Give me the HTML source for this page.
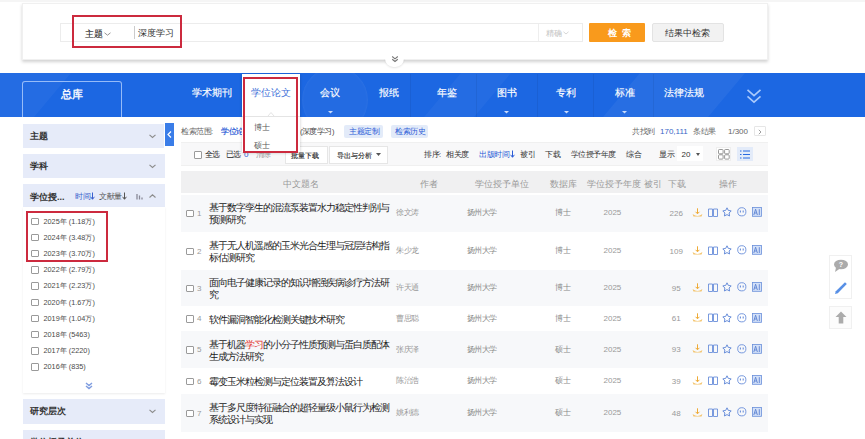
<!DOCTYPE html>
<html><head><meta charset="utf-8">
<style>
*{margin:0;padding:0;box-sizing:border-box}
html,body{width:865px;height:439px;overflow:hidden;background:#fff;font-family:"Liberation Sans",sans-serif;color:#333}
.a{position:absolute;white-space:nowrap}
.t{position:absolute;white-space:nowrap;line-height:1}
.cb{position:absolute;width:7.5px;height:7.5px;border:1px solid #9a9a9a;border-radius:1px;background:#fff}
svg{position:absolute;overflow:visible}
</style></head><body>

<div class="a" style="left:0px;top:0px;width:865px;height:2px;background:#f5f5f5"></div>
<div class="a" style="left:22px;top:3px;width:746px;height:57px;background:#fff;border:1px solid #f0f0f0;box-shadow:0 2px 3px rgba(0,0,0,.18)"></div>
<div class="a" style="left:60px;top:23px;width:523px;height:19px;border:1px solid #ececec;background:#fff"></div>
<div class="t" style="left:85px;top:29.60px;font-size:9px;color:#222;-webkit-text-stroke:0.08px #222">主题</div>
<svg style="left:104px;top:31.5px" width="7" height="4"><path d="M0.5 0.8 L3.5 3.2 L6.5 0.8" fill="none" stroke="#888" stroke-width="0.9"/></svg>
<div class="a" style="left:134px;top:26px;width:1px;height:13px;background:#ccc"></div>
<div class="t" style="left:138px;top:29.30px;font-size:9px;color:#333;">深度学习</div>
<div class="a" style="left:538px;top:24px;width:1px;height:17px;background:#eee"></div>
<div class="t" style="left:546px;top:30.05px;font-size:7.5px;color:#c4c4c4;letter-spacing:-0.5px;">精确</div>
<svg style="left:563px;top:31px" width="6" height="4"><path d="M0.5 0.8 L3 3 L5.5 0.8" fill="none" stroke="#ccc" stroke-width="0.8"/></svg>
<div class="a" style="left:589px;top:23px;width:56px;height:19px;background:#f99a1c;border-radius:1px"></div>
<div class="t" style="left:608px;top:29.30px;font-size:9px;color:#fff;font-weight:bold;letter-spacing:1px">检&nbsp;索</div>
<div class="a" style="left:652px;top:23px;width:72px;height:19px;background:#f2f2f2;border:1px solid #e3e3e3;border-radius:2px"></div>
<div class="t" style="left:665px;top:29.30px;font-size:9px;color:#333;">结果中检索</div>
<div class="a" style="left:385px;top:50px;width:19px;height:17px;border-radius:10px;background:#fff;box-shadow:0 1px 2px rgba(0,0,0,.10)"></div>
<div class="a" style="left:375px;top:48px;width:40px;height:11px;background:#fff"></div>
<svg style="left:391px;top:55px" width="8" height="8"><path d="M1.2 1.5 L4 3.8 L6.8 1.5 M1.2 4.2 L4 6.5 L6.8 4.2" fill="none" stroke="#777" stroke-width="1.1"/></svg>
<div class="a" style="left:72px;top:15px;width:110px;height:33px;border:2px solid #cc2a3e"></div>
<div class="a" style="left:0;top:73px;width:865px;height:44px;background:#1c67e2;overflow:hidden">
<div class="a" style="left:302px;top:-6px;width:66px;height:66px;border-radius:33px;background:rgba(255,255,255,.03);box-shadow:inset 0 0 3px rgba(255,255,255,.08)"></div>
<div class="a" style="left:-30px;top:-10px;width:80px;height:70px;transform:skewX(-40deg);background:rgba(255,255,255,0.04)"></div>
<div class="a" style="left:440px;top:-10px;width:50px;height:70px;transform:skewX(-40deg);background:rgba(255,255,255,0.04)"></div>
<div class="a" style="left:619px;top:-10px;width:105px;height:70px;transform:skewX(-40deg);background:rgba(255,255,255,0.05)"></div>
</div>
<div class="a" style="left:22px;top:81px;width:100px;height:36px;border:1px solid rgba(190,215,255,.75);border-bottom:none;border-radius:3px 3px 0 0"></div>
<div class="t" style="left:61px;top:89.30px;font-size:11px;color:#fff;-webkit-text-stroke:0.35px #fff">总库</div>
<div class="t" style="left:192px;top:88.30px;font-size:10px;color:#fff;-webkit-text-stroke:0.15px #fff">学术期刊</div>
<div class="t" style="left:320px;top:88.30px;font-size:10px;color:#fff;-webkit-text-stroke:0.15px #fff">会议</div>
<div class="t" style="left:379px;top:88.30px;font-size:10px;color:#fff;-webkit-text-stroke:0.15px #fff">报纸</div>
<div class="t" style="left:437px;top:88.30px;font-size:10px;color:#fff;-webkit-text-stroke:0.15px #fff">年鉴</div>
<div class="t" style="left:497px;top:88.30px;font-size:10px;color:#fff;-webkit-text-stroke:0.15px #fff">图书</div>
<div class="t" style="left:556px;top:88.30px;font-size:10px;color:#fff;-webkit-text-stroke:0.15px #fff">专利</div>
<div class="t" style="left:615px;top:88.30px;font-size:10px;color:#fff;-webkit-text-stroke:0.15px #fff">标准</div>
<div class="t" style="left:664px;top:88.30px;font-size:10px;color:#fff;-webkit-text-stroke:0.15px #fff">法律法规</div>
<div class="a" style="left:410px;top:74px;width:1px;height:43px;background:rgba(0,0,0,.06)"></div>
<div class="a" style="left:476px;top:74px;width:1px;height:43px;background:rgba(0,0,0,.06)"></div>
<div class="a" style="left:537px;top:74px;width:1px;height:43px;background:rgba(0,0,0,.06)"></div>
<div class="a" style="left:593px;top:74px;width:1px;height:43px;background:rgba(0,0,0,.06)"></div>
<div class="a" style="left:653px;top:74px;width:1px;height:43px;background:rgba(0,0,0,.06)"></div>
<svg style="left:327.5px;top:111px" width="5" height="3"><path d="M0 0 L5 0 L2.5 2.6 Z" fill="#c9dbfb"/></svg>
<svg style="left:503.5px;top:111px" width="5" height="3"><path d="M0 0 L5 0 L2.5 2.6 Z" fill="#c9dbfb"/></svg>
<svg style="left:563.5px;top:111px" width="5" height="3"><path d="M0 0 L5 0 L2.5 2.6 Z" fill="#c9dbfb"/></svg>
<svg style="left:621.5px;top:111px" width="5" height="3"><path d="M0 0 L5 0 L2.5 2.6 Z" fill="#c9dbfb"/></svg>
<svg style="left:746px;top:88px" width="16" height="17"><path d="M1.5 1.8 L8 7.6 L14.5 1.8 M1.5 8.4 L8 14.2 L14.5 8.4" fill="none" stroke="#a9c9fc" stroke-width="1.6"/></svg>
<div class="a" style="left:23px;top:124px;width:141px;height:24px;background:#e6ebf9"></div>
<div class="t" style="left:30px;top:132.30px;font-size:9px;color:#333;font-weight:bold">主题</div>
<div class="a" style="left:23px;top:154px;width:142px;height:24px;background:#e6ebf9"></div>
<div class="t" style="left:30px;top:162.30px;font-size:9px;color:#333;font-weight:bold">学科</div>
<div class="a" style="left:23px;top:184px;width:142px;height:23px;background:#e6ebf9"></div>
<div class="t" style="left:30px;top:192.80px;font-size:9px;color:#333;font-weight:bold">学位授...</div>
<div class="t" style="left:75px;top:193.05px;font-size:7.5px;color:#3a5fcd;letter-spacing:-0.5px;">时间</div>
<svg style="left:90px;top:192.0px" width="5" height="8"><path d="M2.5 0.5 V7 M0.6 4.8 L2.5 7.3 L4.4 4.8" fill="none" stroke="#3a5fcd" stroke-width="1"/></svg>
<div class="t" style="left:99px;top:193.05px;font-size:7.5px;color:#555;letter-spacing:-0.5px;">文献量</div>
<svg style="left:122px;top:192.0px" width="5" height="8"><path d="M2.5 0.5 V7 M0.6 4.8 L2.5 7.3 L4.4 4.8" fill="none" stroke="#555" stroke-width="1"/></svg>
<svg style="left:136px;top:192px" width="8" height="8"><path d="M1 7.5 V2 M3.5 7.5 V3.5 M6 7.5 V5.5" stroke="#8a8a99" stroke-width="1.3"/></svg>
<svg style="left:149px;top:134px" width="7" height="4"><path d="M0.5 0.8 L3.5 3.5 L6.5 0.8" fill="none" stroke="#8c8c8c" stroke-width="1.1"/></svg>
<svg style="left:149px;top:164px" width="7" height="4"><path d="M0.5 0.8 L3.5 3.5 L6.5 0.8" fill="none" stroke="#8c8c8c" stroke-width="1.1"/></svg>
<svg style="left:149px;top:194px" width="7" height="4"><path d="M0.5 3.5 L3.5 0.8 L6.5 3.5" fill="none" stroke="#8c8c8c" stroke-width="1.1"/></svg>
<div class="a" style="left:23px;top:207px;width:142px;height:186px;background:#fff;box-shadow:0 1px 2px rgba(0,0,0,.08)"></div>
<div class="cb" style="left:31px;top:217.5px"></div>
<div class="t" style="left:43.5px;top:217.55px;font-size:7.3px;color:#4a4a4a;">2025年 (1.18万)</div>
<div class="cb" style="left:31px;top:233.7px"></div>
<div class="t" style="left:43.5px;top:233.75px;font-size:7.3px;color:#4a4a4a;">2024年 (3.48万)</div>
<div class="cb" style="left:31px;top:249.9px"></div>
<div class="t" style="left:43.5px;top:249.95px;font-size:7.3px;color:#4a4a4a;">2023年 (3.70万)</div>
<div class="cb" style="left:31px;top:266.1px"></div>
<div class="t" style="left:43.5px;top:266.15px;font-size:7.3px;color:#4a4a4a;">2022年 (2.79万)</div>
<div class="cb" style="left:31px;top:282.3px"></div>
<div class="t" style="left:43.5px;top:282.35px;font-size:7.3px;color:#4a4a4a;">2021年 (2.23万)</div>
<div class="cb" style="left:31px;top:298.5px"></div>
<div class="t" style="left:43.5px;top:298.55px;font-size:7.3px;color:#4a4a4a;">2020年 (1.67万)</div>
<div class="cb" style="left:31px;top:314.7px"></div>
<div class="t" style="left:43.5px;top:314.75px;font-size:7.3px;color:#4a4a4a;">2019年 (1.04万)</div>
<div class="cb" style="left:31px;top:330.9px"></div>
<div class="t" style="left:43.5px;top:330.95px;font-size:7.3px;color:#4a4a4a;">2018年 (5463)</div>
<div class="cb" style="left:31px;top:347.1px"></div>
<div class="t" style="left:43.5px;top:347.15px;font-size:7.3px;color:#4a4a4a;">2017年 (2220)</div>
<div class="cb" style="left:31px;top:363.3px"></div>
<div class="t" style="left:43.5px;top:363.35px;font-size:7.3px;color:#4a4a4a;">2016年 (835)</div>
<svg style="left:85px;top:382px" width="8" height="8"><path d="M1 1 L4 3.6 L7 1 M1 4 L4 6.6 L7 4" fill="none" stroke="#7f9de0" stroke-width="1.4"/></svg>
<div class="a" style="left:23px;top:399px;width:142px;height:25px;background:#e6ebf9"></div>
<div class="t" style="left:30px;top:407.30px;font-size:9px;color:#333;font-weight:bold">研究层次</div>
<svg style="left:149px;top:409px" width="7" height="4"><path d="M0.5 0.8 L3.5 3.5 L6.5 0.8" fill="none" stroke="#8c8c8c" stroke-width="1.1"/></svg>
<div class="a" style="left:23px;top:430px;width:142px;height:25px;background:#e6ebf9"></div>
<div class="t" style="left:30px;top:438.30px;font-size:9px;color:#333;font-weight:bold">学位授予单位</div>
<div class="a" style="left:165px;top:123px;width:9px;height:23px;background:#3a7de8"></div>
<svg style="left:167px;top:131px" width="5" height="7"><path d="M4 0.5 L1 3.5 L4 6.5" fill="none" stroke="#fff" stroke-width="1.2"/></svg>
<div class="a" style="left:26px;top:211px;width:82px;height:51px;border:2px solid #cc2a3e"></div>
<div class="t" style="left:181px;top:127.75px;font-size:7.5px;color:#666;letter-spacing:-0.5px;">检索范围:</div>
<div class="t" style="left:300px;top:127.75px;font-size:7.5px;color:#444;letter-spacing:-0.5px;">(深度学习)</div>
<div class="t" style="left:221px;top:127.75px;font-size:7.5px;color:#2a5bd7;letter-spacing:-0.5px;-webkit-text-stroke:0.2px #2a5bd7">学位论文</div>
<div class="a" style="left:344px;top:125px;width:39px;height:13px;background:#e3ebf9;border-radius:2px"></div>
<div class="t" style="left:349px;top:127.95px;font-size:7.5px;color:#2a5bd7;letter-spacing:-0.5px;">主题定制</div>
<div class="a" style="left:391px;top:125px;width:37px;height:13px;background:#e3ebf9;border-radius:2px"></div>
<div class="t" style="left:395px;top:127.95px;font-size:7.5px;color:#2a5bd7;letter-spacing:-0.5px;">检索历史</div>
<div class="t" style="left:632px;top:128.05px;font-size:7.5px;color:#666;letter-spacing:-0.5px;">共找到</div>
<div class="t" style="left:660px;top:127.80px;font-size:8px;color:#3866c6;">170,111</div>
<div class="t" style="left:693px;top:128.05px;font-size:7.5px;color:#666;letter-spacing:-0.5px;">条结果</div>
<div class="t" style="left:728px;top:127.80px;font-size:8px;color:#666;">1/300</div>
<div class="a" style="left:754px;top:126px;width:12px;height:10px;border:1px solid #e6e6e6;background:#fff;border-radius:1px"></div>
<svg style="left:758px;top:129px" width="4" height="6"><path d="M0.8 0.8 L3 3 L0.8 5.2" fill="none" stroke="#888" stroke-width="0.8"/></svg>
<div class="a" style="left:181px;top:142px;width:587px;height:24px;background:#f8f8f9;border-top:1px solid #f0f0f0;border-bottom:1px solid #f0f0f0"></div>
<div class="cb" style="left:194px;top:151px"></div>
<div class="t" style="left:205px;top:150.80px;font-size:8px;color:#222;letter-spacing:-1px">全选</div>
<div class="t" style="left:226px;top:150.80px;font-size:8px;color:#222;letter-spacing:-1px">已选</div>
<div class="t" style="left:244px;top:150.80px;font-size:8px;color:#2a5bd7;">0</div>
<div class="t" style="left:256px;top:150.80px;font-size:8px;color:#999;letter-spacing:-1px">清除</div>
<div class="a" style="left:285px;top:146px;width:43px;height:18px;background:#fff;border:1px solid #e6e6e6"></div>
<div class="t" style="left:290.5px;top:151.65px;font-size:7.3px;color:#222;-webkit-text-stroke:0.15px #222">批量下载</div>
<div class="a" style="left:329px;top:146px;width:59px;height:18px;background:#fff;border:1px solid #e6e6e6"></div>
<div class="t" style="left:336.5px;top:151.65px;font-size:7.3px;color:#333;-webkit-text-stroke:0.15px #333">导出与分析</div>
<svg style="left:376px;top:153px" width="5" height="3"><path d="M0 0 L5 0 L2.5 3 Z" fill="#555"/></svg>
<div class="t" style="left:424px;top:151.05px;font-size:7.5px;color:#333;letter-spacing:-0.5px;">排序:</div>
<div class="t" style="left:446px;top:151.05px;font-size:7.5px;color:#333;letter-spacing:-0.5px;">相关度</div>
<div class="t" style="left:479px;top:151.05px;font-size:7.5px;color:#2a5bd7;letter-spacing:-0.5px;">出版时间</div>
<svg style="left:510px;top:150.0px" width="5" height="8"><path d="M2.5 0.5 V7 M0.6 4.8 L2.5 7.3 L4.4 4.8" fill="none" stroke="#2a5bd7" stroke-width="1"/></svg>
<div class="t" style="left:520px;top:151.05px;font-size:7.5px;color:#333;letter-spacing:-0.5px;">被引</div>
<div class="t" style="left:545px;top:151.05px;font-size:7.5px;color:#333;letter-spacing:-0.5px;">下载</div>
<div class="t" style="left:570.5px;top:151.05px;font-size:7.5px;color:#333;letter-spacing:-0.5px;">学位授予年度</div>
<div class="t" style="left:626px;top:151.05px;font-size:7.5px;color:#333;letter-spacing:-0.5px;">综合</div>
<div class="t" style="left:659px;top:151.05px;font-size:7.5px;color:#333;letter-spacing:-0.5px;">显示</div>
<div class="a" style="left:677px;top:146px;width:26px;height:15px;background:#fff"></div>
<div class="t" style="left:681.5px;top:150.80px;font-size:8px;color:#333;">20</div>
<svg style="left:696px;top:153px" width="4" height="3"><path d="M0 0 L4 0 L2 3 Z" fill="#555"/></svg>
<div class="a" style="left:716px;top:147px;width:15px;height:14px;background:#fff;border:1px solid #eee"></div>
<svg style="left:718px;top:149px" width="12" height="11"><rect x="0.5" y="0.5" width="4.6" height="4.3" rx="0.8" fill="none" stroke="#8c8c8c" stroke-width="0.9"/><rect x="6.6" y="0.5" width="4.6" height="4.3" rx="0.8" fill="none" stroke="#8c8c8c" stroke-width="0.9"/><rect x="0.5" y="5.8" width="4.6" height="4.3" rx="0.8" fill="none" stroke="#8c8c8c" stroke-width="0.9"/><rect x="6.6" y="5.8" width="4.6" height="4.3" rx="0.8" fill="none" stroke="#8c8c8c" stroke-width="0.9"/></svg>
<div class="a" style="left:737px;top:147px;width:16px;height:14px;background:#e3ebf9"></div>
<svg style="left:740px;top:150px" width="10" height="9"><path d="M0 1 H1.5 M3 1 H10 M0 4.5 H1.5 M3 4.5 H10 M0 8 H1.5 M3 8 H10" stroke="#2a6ae0" stroke-width="1"/></svg>
<div class="a" style="left:181px;top:171px;width:587px;height:22px;background:#f0f0f1"></div>
<div class="t" style="left:282.5px;top:180.45px;font-size:8.7px;color:#999;">中文题名</div>
<div class="t" style="left:419.5px;top:180.45px;font-size:8.7px;color:#999;">作者</div>
<div class="t" style="left:475px;top:180.45px;font-size:8.7px;color:#999;">学位授予单位</div>
<div class="t" style="left:550px;top:180.45px;font-size:8.7px;color:#999;">数据库</div>
<div class="t" style="left:587px;top:180.45px;font-size:8.7px;color:#999;">学位授予年度</div>
<div class="t" style="left:643.5px;top:180.45px;font-size:8.7px;color:#999;">被引</div>
<div class="t" style="left:668px;top:180.45px;font-size:8.7px;color:#999;">下载</div>
<div class="t" style="left:719px;top:180.45px;font-size:8.7px;color:#999;">操作</div>
<div class="a" style="left:181px;top:195px;width:587px;height:37px;background:#f7f8fa"></div>
<div class="cb" style="left:186px;top:209.5px"></div>
<div class="t" style="left:197px;top:209.80px;font-size:8px;color:#999;">1</div>
<div class="t" style="left:209px;top:203.15px;font-size:9.5px;color:#222;letter-spacing:-1px">基于数字孪生的混流泵装置水力稳定性判别与</div>
<div class="t" style="left:209px;top:215.15px;font-size:9.5px;color:#222;letter-spacing:-1px">预测研究</div>
<div class="t" style="left:396px;top:209.05px;font-size:7.5px;color:#999;letter-spacing:-0.5px;">徐文涛</div>
<div class="t" style="left:466.7px;top:209.05px;font-size:7.5px;color:#888;letter-spacing:-0.5px;">扬州大学</div>
<div class="t" style="left:555.4px;top:209.05px;font-size:7.5px;color:#888;letter-spacing:-0.5px;">博士</div>
<div class="t" style="left:603.5px;top:209.00px;font-size:8px;color:#999;">2025</div>
<div class="t" style="left:659.3px;width:34px;text-align:center;top:209.70px;font-size:8px;color:#999">226</div>
<svg style="left:692px;top:207.7px" width="11" height="9"><path d="M5.5 0.3 V5.5 M3.6 3.8 L5.5 5.8 L7.4 3.8" fill="none" stroke="#eeaa35" stroke-width="1"/><path d="M0.6 6 Q5.5 9.8 10.4 6 L9.5 8.6 H1.5 Z" fill="#f3c267"/></svg>
<svg style="left:708px;top:207.7px" width="10" height="9"><path d="M0.5 1 H4.5 V8.5 H0.5 Z M5.5 1 H9.5 V8.5 H5.5 Z" fill="none" stroke="#6a8fda" stroke-width="0.9"/></svg>
<svg style="left:722px;top:207.2px" width="10" height="10"><path d="M5 0.8 L6.3 3.4 L9.2 3.9 L7.1 6 L7.6 9 L5 7.6 L2.4 9 L2.9 6 L0.8 3.9 L3.7 3.4 Z" fill="none" stroke="#6a8fda" stroke-width="1" stroke-linejoin="round"/></svg>
<svg style="left:737px;top:207.4px" width="10" height="10"><circle cx="4.8" cy="4.8" r="4.1" fill="none" stroke="#6a8fda" stroke-width="0.9"/><path d="M3.4 3.6 V5.6 M6.2 3.6 V5.6" stroke="#6a8fda" stroke-width="1.1"/></svg>
<svg style="left:752px;top:207.2px" width="10" height="10"><rect x="0.5" y="0.5" width="9" height="8.8" fill="#d3e0f7" stroke="#6a8fda" stroke-width="0.8"/><path d="M1.8 8 L3.6 2.2 L5.4 8 M2.5 6 H4.7 M7.3 2.2 V8" fill="none" stroke="#5b82d3" stroke-width="0.9"/></svg>
<div class="cb" style="left:186px;top:247.5px"></div>
<div class="t" style="left:197px;top:247.80px;font-size:8px;color:#999;">2</div>
<div class="t" style="left:209px;top:241.15px;font-size:9.5px;color:#222;letter-spacing:-1px">基于无人机遥感的玉米光合生理与冠层结构指</div>
<div class="t" style="left:209px;top:253.15px;font-size:9.5px;color:#222;letter-spacing:-1px">标估测研究</div>
<div class="t" style="left:396px;top:247.05px;font-size:7.5px;color:#999;letter-spacing:-0.5px;">朱少龙</div>
<div class="t" style="left:466.7px;top:247.05px;font-size:7.5px;color:#888;letter-spacing:-0.5px;">扬州大学</div>
<div class="t" style="left:555.4px;top:247.05px;font-size:7.5px;color:#888;letter-spacing:-0.5px;">博士</div>
<div class="t" style="left:603.5px;top:247.00px;font-size:8px;color:#999;">2025</div>
<div class="t" style="left:659.3px;width:34px;text-align:center;top:247.70px;font-size:8px;color:#999">109</div>
<svg style="left:692px;top:245.7px" width="11" height="9"><path d="M5.5 0.3 V5.5 M3.6 3.8 L5.5 5.8 L7.4 3.8" fill="none" stroke="#eeaa35" stroke-width="1"/><path d="M0.6 6 Q5.5 9.8 10.4 6 L9.5 8.6 H1.5 Z" fill="#f3c267"/></svg>
<svg style="left:708px;top:245.7px" width="10" height="9"><path d="M0.5 1 H4.5 V8.5 H0.5 Z M5.5 1 H9.5 V8.5 H5.5 Z" fill="none" stroke="#6a8fda" stroke-width="0.9"/></svg>
<svg style="left:722px;top:245.2px" width="10" height="10"><path d="M5 0.8 L6.3 3.4 L9.2 3.9 L7.1 6 L7.6 9 L5 7.6 L2.4 9 L2.9 6 L0.8 3.9 L3.7 3.4 Z" fill="none" stroke="#6a8fda" stroke-width="1" stroke-linejoin="round"/></svg>
<svg style="left:737px;top:245.4px" width="10" height="10"><circle cx="4.8" cy="4.8" r="4.1" fill="none" stroke="#6a8fda" stroke-width="0.9"/><path d="M3.4 3.6 V5.6 M6.2 3.6 V5.6" stroke="#6a8fda" stroke-width="1.1"/></svg>
<svg style="left:752px;top:245.2px" width="10" height="10"><rect x="0.5" y="0.5" width="9" height="8.8" fill="#d3e0f7" stroke="#6a8fda" stroke-width="0.8"/><path d="M1.8 8 L3.6 2.2 L5.4 8 M2.5 6 H4.7 M7.3 2.2 V8" fill="none" stroke="#5b82d3" stroke-width="0.9"/></svg>
<div class="a" style="left:181px;top:270px;width:587px;height:36px;background:#f7f8fa"></div>
<div class="cb" style="left:186px;top:284.5px"></div>
<div class="t" style="left:197px;top:284.80px;font-size:8px;color:#999;">3</div>
<div class="t" style="left:209px;top:278.15px;font-size:9.5px;color:#222;letter-spacing:-1px">面向电子健康记录的知识增强疾病诊疗方法研</div>
<div class="t" style="left:209px;top:290.15px;font-size:9.5px;color:#222;letter-spacing:-1px">究</div>
<div class="t" style="left:396px;top:284.05px;font-size:7.5px;color:#999;letter-spacing:-0.5px;">许天通</div>
<div class="t" style="left:466.7px;top:284.05px;font-size:7.5px;color:#888;letter-spacing:-0.5px;">扬州大学</div>
<div class="t" style="left:555.4px;top:284.05px;font-size:7.5px;color:#888;letter-spacing:-0.5px;">博士</div>
<div class="t" style="left:603.5px;top:284.00px;font-size:8px;color:#999;">2025</div>
<div class="t" style="left:659.3px;width:34px;text-align:center;top:284.70px;font-size:8px;color:#999">95</div>
<svg style="left:692px;top:282.7px" width="11" height="9"><path d="M5.5 0.3 V5.5 M3.6 3.8 L5.5 5.8 L7.4 3.8" fill="none" stroke="#eeaa35" stroke-width="1"/><path d="M0.6 6 Q5.5 9.8 10.4 6 L9.5 8.6 H1.5 Z" fill="#f3c267"/></svg>
<svg style="left:708px;top:282.7px" width="10" height="9"><path d="M0.5 1 H4.5 V8.5 H0.5 Z M5.5 1 H9.5 V8.5 H5.5 Z" fill="none" stroke="#6a8fda" stroke-width="0.9"/></svg>
<svg style="left:722px;top:282.2px" width="10" height="10"><path d="M5 0.8 L6.3 3.4 L9.2 3.9 L7.1 6 L7.6 9 L5 7.6 L2.4 9 L2.9 6 L0.8 3.9 L3.7 3.4 Z" fill="none" stroke="#6a8fda" stroke-width="1" stroke-linejoin="round"/></svg>
<svg style="left:737px;top:282.4px" width="10" height="10"><circle cx="4.8" cy="4.8" r="4.1" fill="none" stroke="#6a8fda" stroke-width="0.9"/><path d="M3.4 3.6 V5.6 M6.2 3.6 V5.6" stroke="#6a8fda" stroke-width="1.1"/></svg>
<svg style="left:752px;top:282.2px" width="10" height="10"><rect x="0.5" y="0.5" width="9" height="8.8" fill="#d3e0f7" stroke="#6a8fda" stroke-width="0.8"/><path d="M1.8 8 L3.6 2.2 L5.4 8 M2.5 6 H4.7 M7.3 2.2 V8" fill="none" stroke="#5b82d3" stroke-width="0.9"/></svg>
<div class="cb" style="left:186px;top:315.0px"></div>
<div class="t" style="left:197px;top:315.30px;font-size:8px;color:#999;">4</div>
<div class="t" style="left:209px;top:314.75px;font-size:9.5px;color:#222;letter-spacing:-1px">软件漏洞智能化检测关键技术研究</div>
<div class="t" style="left:396px;top:314.55px;font-size:7.5px;color:#999;letter-spacing:-0.5px;">曹思聪</div>
<div class="t" style="left:466.7px;top:314.55px;font-size:7.5px;color:#888;letter-spacing:-0.5px;">扬州大学</div>
<div class="t" style="left:555.4px;top:314.55px;font-size:7.5px;color:#888;letter-spacing:-0.5px;">博士</div>
<div class="t" style="left:603.5px;top:314.50px;font-size:8px;color:#999;">2025</div>
<div class="t" style="left:659.3px;width:34px;text-align:center;top:315.20px;font-size:8px;color:#999">61</div>
<svg style="left:692px;top:313.2px" width="11" height="9"><path d="M5.5 0.3 V5.5 M3.6 3.8 L5.5 5.8 L7.4 3.8" fill="none" stroke="#eeaa35" stroke-width="1"/><path d="M0.6 6 Q5.5 9.8 10.4 6 L9.5 8.6 H1.5 Z" fill="#f3c267"/></svg>
<svg style="left:708px;top:313.2px" width="10" height="9"><path d="M0.5 1 H4.5 V8.5 H0.5 Z M5.5 1 H9.5 V8.5 H5.5 Z" fill="none" stroke="#6a8fda" stroke-width="0.9"/></svg>
<svg style="left:722px;top:312.7px" width="10" height="10"><path d="M5 0.8 L6.3 3.4 L9.2 3.9 L7.1 6 L7.6 9 L5 7.6 L2.4 9 L2.9 6 L0.8 3.9 L3.7 3.4 Z" fill="none" stroke="#6a8fda" stroke-width="1" stroke-linejoin="round"/></svg>
<svg style="left:737px;top:312.9px" width="10" height="10"><circle cx="4.8" cy="4.8" r="4.1" fill="none" stroke="#6a8fda" stroke-width="0.9"/><path d="M3.4 3.6 V5.6 M6.2 3.6 V5.6" stroke="#6a8fda" stroke-width="1.1"/></svg>
<svg style="left:752px;top:312.7px" width="10" height="10"><rect x="0.5" y="0.5" width="9" height="8.8" fill="#d3e0f7" stroke="#6a8fda" stroke-width="0.8"/><path d="M1.8 8 L3.6 2.2 L5.4 8 M2.5 6 H4.7 M7.3 2.2 V8" fill="none" stroke="#5b82d3" stroke-width="0.9"/></svg>
<div class="a" style="left:181px;top:331px;width:587px;height:37px;background:#f7f8fa"></div>
<div class="cb" style="left:186px;top:346.0px"></div>
<div class="t" style="left:197px;top:346.30px;font-size:8px;color:#999;">5</div>
<div class="t" style="left:209px;top:339.65px;font-size:9.5px;color:#222;letter-spacing:-1px">基于机器<span style="color:#e3302c">学习</span>的小分子性质预测与蛋白质配体</div>
<div class="t" style="left:209px;top:351.65px;font-size:9.5px;color:#222;letter-spacing:-1px">生成方法研究</div>
<div class="t" style="left:396px;top:345.55px;font-size:7.5px;color:#999;letter-spacing:-0.5px;">张庆泽</div>
<div class="t" style="left:466.7px;top:345.55px;font-size:7.5px;color:#888;letter-spacing:-0.5px;">扬州大学</div>
<div class="t" style="left:555.4px;top:345.55px;font-size:7.5px;color:#888;letter-spacing:-0.5px;">硕士</div>
<div class="t" style="left:603.5px;top:345.50px;font-size:8px;color:#999;">2025</div>
<div class="t" style="left:659.3px;width:34px;text-align:center;top:346.20px;font-size:8px;color:#999">93</div>
<svg style="left:692px;top:344.2px" width="11" height="9"><path d="M5.5 0.3 V5.5 M3.6 3.8 L5.5 5.8 L7.4 3.8" fill="none" stroke="#eeaa35" stroke-width="1"/><path d="M0.6 6 Q5.5 9.8 10.4 6 L9.5 8.6 H1.5 Z" fill="#f3c267"/></svg>
<svg style="left:708px;top:344.2px" width="10" height="9"><path d="M0.5 1 H4.5 V8.5 H0.5 Z M5.5 1 H9.5 V8.5 H5.5 Z" fill="none" stroke="#6a8fda" stroke-width="0.9"/></svg>
<svg style="left:722px;top:343.7px" width="10" height="10"><path d="M5 0.8 L6.3 3.4 L9.2 3.9 L7.1 6 L7.6 9 L5 7.6 L2.4 9 L2.9 6 L0.8 3.9 L3.7 3.4 Z" fill="none" stroke="#6a8fda" stroke-width="1" stroke-linejoin="round"/></svg>
<svg style="left:737px;top:343.9px" width="10" height="10"><circle cx="4.8" cy="4.8" r="4.1" fill="none" stroke="#6a8fda" stroke-width="0.9"/><path d="M3.4 3.6 V5.6 M6.2 3.6 V5.6" stroke="#6a8fda" stroke-width="1.1"/></svg>
<svg style="left:752px;top:343.7px" width="10" height="10"><rect x="0.5" y="0.5" width="9" height="8.8" fill="#d3e0f7" stroke="#6a8fda" stroke-width="0.8"/><path d="M1.8 8 L3.6 2.2 L5.4 8 M2.5 6 H4.7 M7.3 2.2 V8" fill="none" stroke="#5b82d3" stroke-width="0.9"/></svg>
<div class="cb" style="left:186px;top:377.5px"></div>
<div class="t" style="left:197px;top:377.80px;font-size:8px;color:#999;">6</div>
<div class="t" style="left:209px;top:377.25px;font-size:9.5px;color:#222;letter-spacing:-1px">霉变玉米粒检测与定位装置及算法设计</div>
<div class="t" style="left:396px;top:377.05px;font-size:7.5px;color:#999;letter-spacing:-0.5px;">陈治浩</div>
<div class="t" style="left:466.7px;top:377.05px;font-size:7.5px;color:#888;letter-spacing:-0.5px;">扬州大学</div>
<div class="t" style="left:555.4px;top:377.05px;font-size:7.5px;color:#888;letter-spacing:-0.5px;">硕士</div>
<div class="t" style="left:603.5px;top:377.00px;font-size:8px;color:#999;">2025</div>
<div class="t" style="left:659.3px;width:34px;text-align:center;top:377.70px;font-size:8px;color:#999">39</div>
<svg style="left:692px;top:375.7px" width="11" height="9"><path d="M5.5 0.3 V5.5 M3.6 3.8 L5.5 5.8 L7.4 3.8" fill="none" stroke="#eeaa35" stroke-width="1"/><path d="M0.6 6 Q5.5 9.8 10.4 6 L9.5 8.6 H1.5 Z" fill="#f3c267"/></svg>
<svg style="left:708px;top:375.7px" width="10" height="9"><path d="M0.5 1 H4.5 V8.5 H0.5 Z M5.5 1 H9.5 V8.5 H5.5 Z" fill="none" stroke="#6a8fda" stroke-width="0.9"/></svg>
<svg style="left:722px;top:375.2px" width="10" height="10"><path d="M5 0.8 L6.3 3.4 L9.2 3.9 L7.1 6 L7.6 9 L5 7.6 L2.4 9 L2.9 6 L0.8 3.9 L3.7 3.4 Z" fill="none" stroke="#6a8fda" stroke-width="1" stroke-linejoin="round"/></svg>
<svg style="left:737px;top:375.4px" width="10" height="10"><circle cx="4.8" cy="4.8" r="4.1" fill="none" stroke="#6a8fda" stroke-width="0.9"/><path d="M3.4 3.6 V5.6 M6.2 3.6 V5.6" stroke="#6a8fda" stroke-width="1.1"/></svg>
<svg style="left:752px;top:375.2px" width="10" height="10"><rect x="0.5" y="0.5" width="9" height="8.8" fill="#d3e0f7" stroke="#6a8fda" stroke-width="0.8"/><path d="M1.8 8 L3.6 2.2 L5.4 8 M2.5 6 H4.7 M7.3 2.2 V8" fill="none" stroke="#5b82d3" stroke-width="0.9"/></svg>
<div class="a" style="left:181px;top:394px;width:587px;height:38px;background:#f7f8fa"></div>
<div class="cb" style="left:186px;top:409.5px"></div>
<div class="t" style="left:197px;top:409.80px;font-size:8px;color:#999;">7</div>
<div class="t" style="left:209px;top:403.15px;font-size:9.5px;color:#222;letter-spacing:-1px">基于多尺度特征融合的超轻量级小鼠行为检测</div>
<div class="t" style="left:209px;top:415.15px;font-size:9.5px;color:#222;letter-spacing:-1px">系统设计与实现</div>
<div class="t" style="left:396px;top:409.05px;font-size:7.5px;color:#999;letter-spacing:-0.5px;">姚利德</div>
<div class="t" style="left:466.7px;top:409.05px;font-size:7.5px;color:#888;letter-spacing:-0.5px;">扬州大学</div>
<div class="t" style="left:555.4px;top:409.05px;font-size:7.5px;color:#888;letter-spacing:-0.5px;">硕士</div>
<div class="t" style="left:603.5px;top:409.00px;font-size:8px;color:#999;">2025</div>
<div class="t" style="left:659.3px;width:34px;text-align:center;top:409.70px;font-size:8px;color:#999">48</div>
<svg style="left:692px;top:407.7px" width="11" height="9"><path d="M5.5 0.3 V5.5 M3.6 3.8 L5.5 5.8 L7.4 3.8" fill="none" stroke="#eeaa35" stroke-width="1"/><path d="M0.6 6 Q5.5 9.8 10.4 6 L9.5 8.6 H1.5 Z" fill="#f3c267"/></svg>
<svg style="left:708px;top:407.7px" width="10" height="9"><path d="M0.5 1 H4.5 V8.5 H0.5 Z M5.5 1 H9.5 V8.5 H5.5 Z" fill="none" stroke="#6a8fda" stroke-width="0.9"/></svg>
<svg style="left:722px;top:407.2px" width="10" height="10"><path d="M5 0.8 L6.3 3.4 L9.2 3.9 L7.1 6 L7.6 9 L5 7.6 L2.4 9 L2.9 6 L0.8 3.9 L3.7 3.4 Z" fill="none" stroke="#6a8fda" stroke-width="1" stroke-linejoin="round"/></svg>
<svg style="left:737px;top:407.4px" width="10" height="10"><circle cx="4.8" cy="4.8" r="4.1" fill="none" stroke="#6a8fda" stroke-width="0.9"/><path d="M3.4 3.6 V5.6 M6.2 3.6 V5.6" stroke="#6a8fda" stroke-width="1.1"/></svg>
<svg style="left:752px;top:407.2px" width="10" height="10"><rect x="0.5" y="0.5" width="9" height="8.8" fill="#d3e0f7" stroke="#6a8fda" stroke-width="0.8"/><path d="M1.8 8 L3.6 2.2 L5.4 8 M2.5 6 H4.7 M7.3 2.2 V8" fill="none" stroke="#5b82d3" stroke-width="0.9"/></svg>
<div class="a" style="left:242px;top:74px;width:58px;height:78px;background:#fff;box-shadow:0 1px 3px rgba(0,0,0,.2)"></div>
<div class="a" style="left:242px;top:116px;width:58px;height:1px;background:#e4e4e4"></div>
<svg style="left:268px;top:112px" width="6" height="4"><path d="M0 4 L3 0.5 L6 4" fill="#fff" stroke="#ddd" stroke-width="0.8"/></svg>
<div class="t" style="left:251px;top:88.30px;font-size:10px;color:#3d6fd8;">学位论文</div>
<div class="t" style="left:254px;top:124.05px;font-size:7.5px;color:#555;letter-spacing:-0.5px;">博士</div>
<div class="t" style="left:254px;top:142.05px;font-size:7.5px;color:#555;letter-spacing:-0.5px;">硕士</div>
<div class="a" style="left:243px;top:77px;width:55px;height:76px;border:2px solid #cc2a3e"></div>
<div class="a" style="left:829px;top:255px;width:23px;height:44px;border:1px solid #f0f0f0;background:#fff"></div>
<svg style="left:833px;top:259px" width="16" height="14"><ellipse cx="8" cy="5.5" rx="7" ry="4.8" fill="#ababab"/><path d="M3 8.5 L2 13 L7 9.5 Z" fill="#ababab"/><text x="8" y="8.3" font-size="7" font-family="Liberation Sans" font-weight="bold" fill="#fff" text-anchor="middle">?</text></svg>
<svg style="left:834px;top:281px" width="14" height="14"><path d="M1 13 L1.8 10.2 L11 1.2 L12.8 3 L3.8 12.2 Z" fill="#5890e6"/></svg>
<div class="a" style="left:829px;top:306px;width:23px;height:23px;border:1px solid #f0f0f0;background:#fcfcfc"></div>
<svg style="left:835px;top:311px" width="12" height="13"><path d="M6 0.5 L11.5 6 H8.3 V12.5 H3.7 V6 H0.5 Z" fill="#ababab"/></svg>
</body></html>
